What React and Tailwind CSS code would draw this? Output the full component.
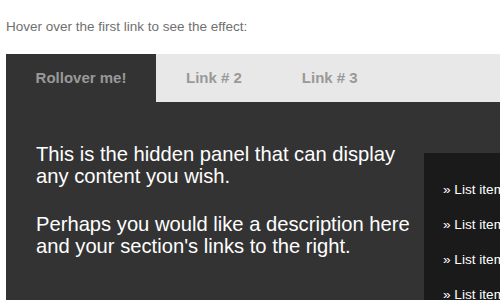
export default function App() {
  const tabs = ["Link # 2", "Link # 3"];
  const items = ["List item", "List item", "List item", "List item"];

  return (
    <div className="h-[300px] overflow-hidden bg-white pl-[6px] font-['Liberation_Sans',Arial,sans-serif]">
      <p className="pt-[19px] text-[13.5px] leading-[16px] text-[#707070]">
        Hover over the first link to see the effect:
      </p>

      <div className="mt-[19px] h-[300px] bg-[#333333]">
        {/* tab bar */}
        <div className="flex h-[48px] items-center bg-[#e8e8e8] text-[15px] font-bold text-[#999999]">
          <div className="flex h-full w-[150px] items-center justify-center bg-[#333333]">
            Rollover me!
          </div>
          {tabs.map((t) => (
            <div key={t} className="px-[30px]">
              {t}
            </div>
          ))}
        </div>

        {/* hidden panel */}
        <div className="flex">
          <div className="w-[418px] shrink-0 pl-[30px] pt-[41px] text-[20.2px] leading-[22px] text-white">
            <p className="whitespace-nowrap">
              This is the hidden panel that can display
              <br />
              any content you wish.
            </p>
            <p className="mt-[26px] whitespace-nowrap">
              Perhaps you would like a description here
              <br />
              and your section's links to the right.
            </p>
          </div>
          <ul className="mt-[51px] h-[200px] flex-1 overflow-hidden bg-[#1a1a1a] pl-[19px] pt-[19px] text-[13.6px] text-white">
            {items.map((it, i) => (
              <li key={i} className="whitespace-nowrap leading-[35px]">
                » {it}
              </li>
            ))}
          </ul>
        </div>
      </div>
    </div>
  );
}
